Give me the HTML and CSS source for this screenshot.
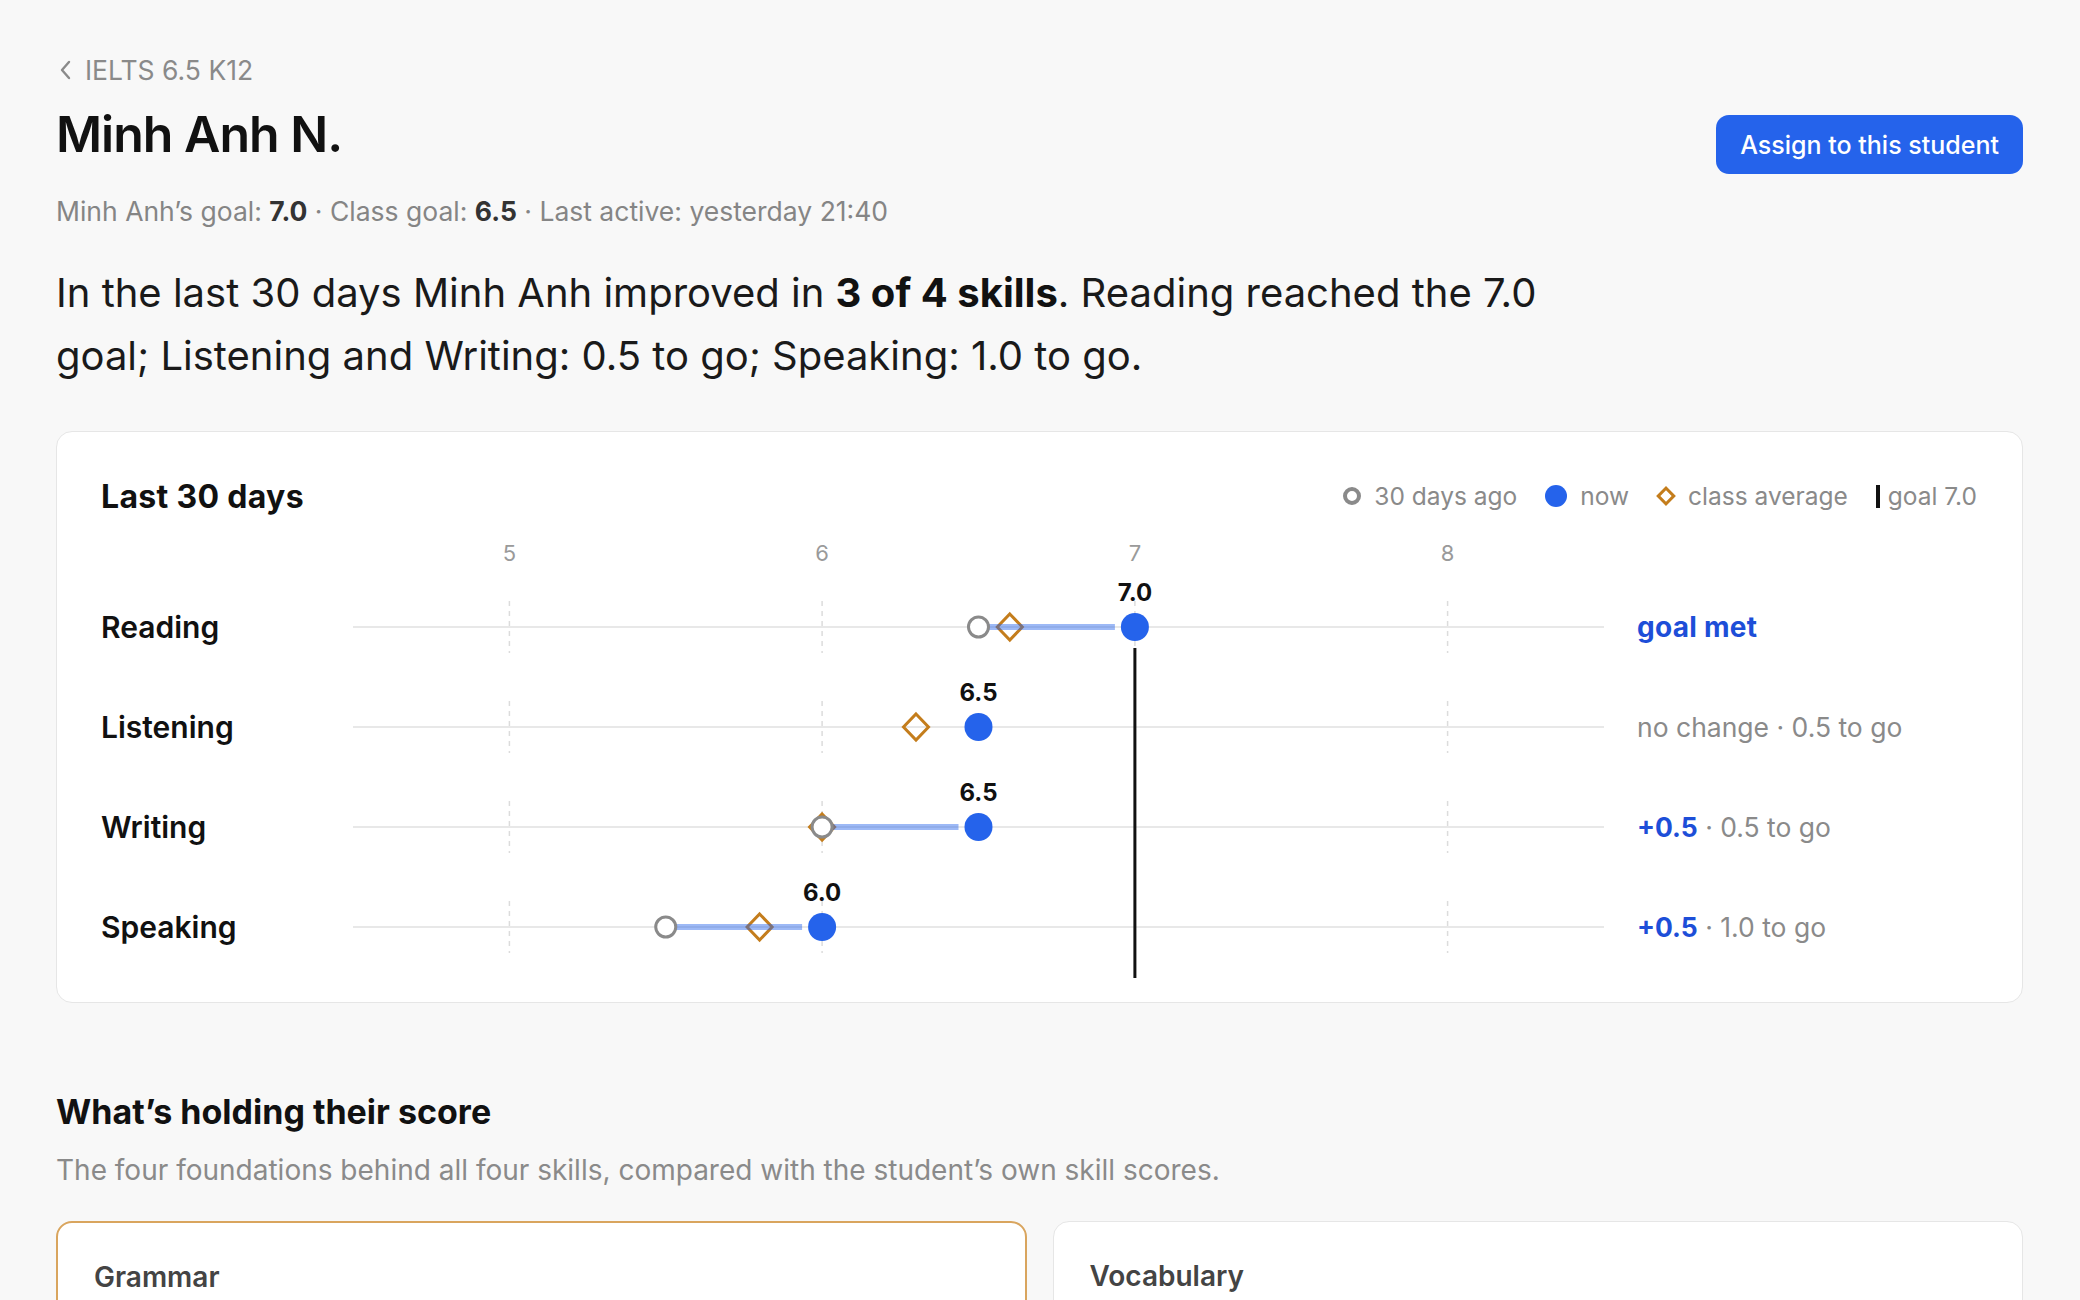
FILE: index.html
```html
<!DOCTYPE html>
<html lang="en">
<head>
    <meta charset="UTF-8">
    <meta name="viewport" content="width=device-width, initial-scale=1.0">
    <title>Minh Anh N. - IELTS 6.5 K12</title>
    <link rel="stylesheet" href="styles.css">
</head>
<body>
    <main class="page">
        <a class="back-link" href="#class">
            <svg class="back-icon" width="14" height="22" viewBox="0 0 14 22"><path d="M10 3 L3 11 L10 19" fill="none" stroke="#8a8a8a" stroke-width="2.4" stroke-linecap="round" stroke-linejoin="round"/></svg>
            IELTS 6.5 K12
        </a>

        <div class="student-head">
            <h1 class="student-name">Minh Anh N.</h1>
            <button class="assign-btn">Assign to this student</button>
        </div>
        <p class="student-meta">Minh Anh’s goal: <b>7.0</b> · Class goal: <b>6.5</b> · Last active: yesterday 21:40</p>

        <p class="summary">In the last 30 days Minh Anh improved in <b>3 of 4 skills</b>. Reading reached the 7.0 goal; Listening and Writing: 0.5 to go; Speaking: 1.0 to go.</p>

        <section class="card progress-card">
            <div class="card-head">
                <h2 class="card-title">Last 30 days</h2>
                <ul class="legend">
                    <li><span class="mark mark-old"></span>30 days ago</li>
                    <li><span class="mark mark-now"></span>now</li>
                    <li><span class="mark mark-avg"></span>class average</li>
                    <li class="legend-goal"><span class="mark mark-goal"></span>goal 7.0</li>
                </ul>
            </div>

            <div class="chart">
                <svg class="plot" width="1251" height="450" viewBox="0 0 1251 450">
                    <g class="axis" font-size="22" fill="#9a9a9a" text-anchor="middle">
                        <text x="156.4" y="23" dominant-baseline="central">5</text>
                        <text x="469.1" y="23" dominant-baseline="central">6</text>
                        <text x="781.9" y="23" dominant-baseline="central">7</text>
                        <text x="1094.6" y="23" dominant-baseline="central">8</text>
                    </g>

                    <g stroke="#e8e8e8" stroke-width="2">
                        <line x1="0" y1="97" x2="1251" y2="97"/>
                        <line x1="0" y1="197" x2="1251" y2="197"/>
                        <line x1="0" y1="297" x2="1251" y2="297"/>
                        <line x1="0" y1="397" x2="1251" y2="397"/>
                    </g>

                    <g stroke="#dcdcdc" stroke-width="1.5" stroke-dasharray="5 5">
                        <line x1="156.4" y1="71" x2="156.4" y2="123"/>
                        <line x1="469.1" y1="71" x2="469.1" y2="123"/>
                        <line x1="781.9" y1="71" x2="781.9" y2="123"/>
                        <line x1="1094.6" y1="71" x2="1094.6" y2="123"/>
                        <line x1="156.4" y1="171" x2="156.4" y2="223"/>
                        <line x1="469.1" y1="171" x2="469.1" y2="223"/>
                        <line x1="781.9" y1="171" x2="781.9" y2="223"/>
                        <line x1="1094.6" y1="171" x2="1094.6" y2="223"/>
                        <line x1="156.4" y1="271" x2="156.4" y2="323"/>
                        <line x1="469.1" y1="271" x2="469.1" y2="323"/>
                        <line x1="781.9" y1="271" x2="781.9" y2="323"/>
                        <line x1="1094.6" y1="271" x2="1094.6" y2="323"/>
                        <line x1="156.4" y1="371" x2="156.4" y2="423"/>
                        <line x1="469.1" y1="371" x2="469.1" y2="423"/>
                        <line x1="781.9" y1="371" x2="781.9" y2="423"/>
                        <line x1="1094.6" y1="371" x2="1094.6" y2="423"/>
                    </g>

                    <!-- goal 7.0 -->
                    <line x1="781.9" y1="118" x2="781.9" y2="448" stroke="#111" stroke-width="3"/>

                    <!-- Reading: 6.5 -> 7.0, class 6.6 -->
                    <path d="M656.8 84 L669.3 97 L656.8 110 L644.3 97 Z" fill="none" stroke="#c47d1c" stroke-width="3"/>
                    <line x1="625.5" y1="97" x2="761.9" y2="97" stroke="#2563eb" stroke-opacity="0.45" stroke-width="6"/>
                    <circle cx="625.5" cy="97" r="10" fill="#fff" stroke="#8a8a8a" stroke-width="3"/>
                    <circle cx="781.9" cy="97" r="14" fill="#2563eb"/>
                    <text class="val" x="781.9" y="62" text-anchor="middle" dominant-baseline="central">7.0</text>

                    <!-- Listening: 6.5, class 6.3 -->
                    <path d="M563 184 L575.5 197 L563 210 L550.5 197 Z" fill="none" stroke="#c47d1c" stroke-width="3"/>
                    <circle cx="625.5" cy="197" r="14" fill="#2563eb"/>
                    <text class="val" x="625.5" y="162" text-anchor="middle" dominant-baseline="central">6.5</text>

                    <!-- Writing: 6.0 -> 6.5, class 6.0 -->
                    <path d="M469.1 284 L481.6 297 L469.1 310 L456.6 297 Z" fill="none" stroke="#c47d1c" stroke-width="3"/>
                    <line x1="469.1" y1="297" x2="605.5" y2="297" stroke="#2563eb" stroke-opacity="0.45" stroke-width="6"/>
                    <circle cx="469.1" cy="297" r="10" fill="#fff" stroke="#8a8a8a" stroke-width="3"/>
                    <circle cx="625.5" cy="297" r="14" fill="#2563eb"/>
                    <text class="val" x="625.5" y="262" text-anchor="middle" dominant-baseline="central">6.5</text>

                    <!-- Speaking: 5.5 -> 6.0, class 5.8 -->
                    <path d="M406.6 384 L419.1 397 L406.6 410 L394.1 397 Z" fill="none" stroke="#c47d1c" stroke-width="3"/>
                    <line x1="312.75" y1="397" x2="449.1" y2="397" stroke="#2563eb" stroke-opacity="0.45" stroke-width="6"/>
                    <circle cx="312.75" cy="397" r="10" fill="#fff" stroke="#8a8a8a" stroke-width="3"/>
                    <circle cx="469.1" cy="397" r="14" fill="#2563eb"/>
                    <text class="val" x="469.1" y="362" text-anchor="middle" dominant-baseline="central">6.0</text>
                </svg>

                <div class="skill r1">Reading</div>
                <div class="status r1"><span class="up met">goal met</span></div>

                <div class="skill r2">Listening</div>
                <div class="status r2">no change · 0.5 to go</div>

                <div class="skill r3">Writing</div>
                <div class="status r3"><span class="up">+0.5</span> · 0.5 to go</div>

                <div class="skill r4">Speaking</div>
                <div class="status r4"><span class="up">+0.5</span> · 1.0 to go</div>
            </div>
        </section>

        <section class="foundations">
            <h2 class="section-title">What’s holding their score</h2>
            <p class="section-sub">The four foundations behind all four skills, compared with the student’s own skill scores.</p>
            <div class="foundation-grid">
                <div class="card foundation weak">
                    <h3 class="foundation-name">Grammar</h3>
                </div>
                <div class="card foundation">
                    <h3 class="foundation-name">Vocabulary</h3>
                </div>
            </div>
        </section>
    </main>
</body>
</html>
```

FILE: styles.css
```css
body {
    margin: 0;
    background-color: #f8f8f8;
    font-family: Inter, "Noto Sans", sans-serif;
    color: #141414;
}

.page {
    padding: 53px 57px 0 56px;
}

.back-link {
    display: flex;
    align-items: center;
    gap: 12px;
    height: 34px;
    font-size: 26.5px;
    color: #8a8a8a;
    text-decoration: none;
}

.back-icon {
    margin-left: 3px;
}

.student-head {
    display: flex;
    justify-content: space-between;
    align-items: flex-start;
    margin-top: 17px;
}

.student-name {
    margin: 0;
    font-size: 50px;
    line-height: 60px;
    font-weight: 600;
    letter-spacing: -0.02em;
    color: #111;
}

.assign-btn {
    margin-top: 11px;
    height: 59px;
    padding: 0 24px;
    border: none;
    border-radius: 13px;
    background-color: #2563eb;
    color: white;
    font-family: inherit;
    font-size: 25px;
    font-weight: 500;
    cursor: pointer;
}

.student-meta {
    margin: 20px 0 0;
    font-size: 26.5px;
    line-height: 34px;
    color: #858585;
}

.student-meta b {
    color: #333;
    font-weight: 700;
}

.summary {
    max-width: 1520px;
    margin: 33px 0 0;
    font-size: 40px;
    line-height: 63px;
    color: #1a1a1a;
}

.summary b {
    font-weight: 700;
    color: #111;
}

.card {
    background: white;
    border: 1px solid #e6e6e6;
    border-radius: 16px;
    box-sizing: border-box;
}

.progress-card {
    margin-top: 44px;
    padding: 44px 45px 22px 44px;
}

.card-head {
    display: flex;
    justify-content: space-between;
    align-items: center;
    height: 40px;
}

.card-title {
    margin: 0;
    font-size: 32px;
    font-weight: 700;
    letter-spacing: 0.01em;
    color: #111;
}

.legend {
    display: flex;
    align-items: center;
    gap: 28px;
    margin: 0;
    padding: 0;
    list-style: none;
    font-size: 24.5px;
    color: #8a8a8a;
}

.legend li {
    display: flex;
    align-items: center;
    gap: 13px;
}

.legend .legend-goal {
    gap: 8px;
}

.mark {
    display: inline-block;
    box-sizing: border-box;
}

.mark-old {
    width: 18px;
    height: 18px;
    border: 4px solid #8a8a8a;
    border-radius: 50%;
}

.mark-now {
    width: 22px;
    height: 22px;
    border-radius: 50%;
    background: #2563eb;
}

.mark-avg {
    width: 14px;
    height: 14px;
    margin: 0 2px;
    border: 3.5px solid #c47d1c;
    transform: rotate(45deg);
}

.mark-goal {
    width: 4px;
    height: 23px;
    background: #111;
}

.chart {
    display: grid;
    grid-template-columns: 252px 1251px 1fr;
    grid-template-rows: 47px repeat(4, 100px) 3px;
    align-items: center;
    margin-top: 14px;
}

.plot {
    grid-column: 2;
    grid-row: 1 / 7;
    align-self: start;
    overflow: visible;
}

.plot .val {
    font-size: 24px;
    font-weight: 700;
    fill: #111;
}

.skill {
    grid-column: 1;
    font-size: 30px;
    font-weight: 600;
    color: #111;
}

.status {
    grid-column: 3;
    padding-left: 33px;
    font-size: 26.5px;
    color: #8a8a8a;
}

.status .up {
    color: #1d4ed8;
    font-weight: 700;
}

.status .met {
    font-size: 28px;
    letter-spacing: 0.01em;
}

.r1 { grid-row: 2; }
.r2 { grid-row: 3; }
.r3 { grid-row: 4; }
.r4 { grid-row: 5; }

.foundations {
    margin-top: 87px;
}

.section-title {
    margin: 0;
    font-size: 34px;
    line-height: 44px;
    font-weight: 700;
    color: #111;
}

.section-sub {
    margin: 18px 0 0;
    font-size: 28px;
    line-height: 36px;
    color: #8a8a8a;
}

.foundation-grid {
    display: grid;
    grid-template-columns: 1fr 1fr;
    gap: 26px;
    margin-top: 33px;
}

.foundation {
    height: 200px;
    padding: 36px 36px;
}

.foundation.weak {
    border: 2px solid #d9a55e;
}

.foundation-name {
    margin: 0;
    font-size: 28px;
    line-height: 36px;
    font-weight: 600;
    color: #444;
}
```
